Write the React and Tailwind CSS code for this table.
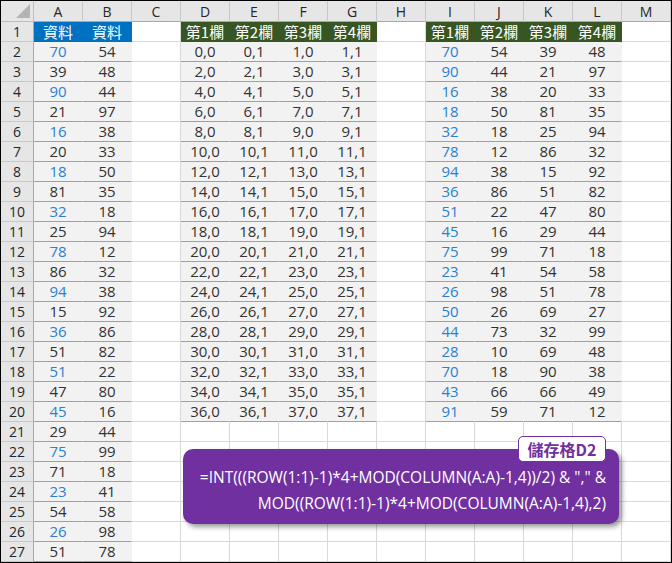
import React from "react";

const COLS = ["A", "B", "C", "D", "E", "F", "G", "H", "I", "J", "K", "L", "M"];

const AB = [
  [70, 54], [39, 48], [90, 44], [21, 97], [16, 38], [20, 33], [18, 50], [81, 35],
  [32, 18], [25, 94], [78, 12], [86, 32], [94, 38], [15, 92], [36, 86], [51, 82],
  [51, 22], [47, 80], [45, 16], [29, 44], [75, 99], [71, 18], [23, 41], [54, 58],
  [26, 98], [51, 78],
];

const IL = [
  [70, 54, 39, 48], [90, 44, 21, 97], [16, 38, 20, 33], [18, 50, 81, 35],
  [32, 18, 25, 94], [78, 12, 86, 32], [94, 38, 15, 92], [36, 86, 51, 82],
  [51, 22, 47, 80], [45, 16, 29, 44], [75, 99, 71, 18], [23, 41, 54, 58],
  [26, 98, 51, 78], [50, 26, 69, 27], [44, 73, 32, 99], [28, 10, 69, 48],
  [70, 18, 90, 38], [43, 66, 66, 49], [91, 59, 71, 12],
];

const HEAD4 = ["第1欄", "第2欄", "第3欄", "第4欄"];

// returns { text, kind } for a cell; kind decides fill/colour
function cellOf(c, r) {
  if (c <= 1) {
    if (r === 1) return { text: "資料", kind: "blue" };
    const v = AB[r - 2][c];
    const blue = c === 0 && r % 2 === 0;
    return { text: v, kind: blue ? "fillBlue" : "fill" };
  }
  if (c >= 3 && c <= 6 && r <= 20) {
    if (r === 1) return { text: HEAD4[c - 3], kind: "green" };
    const k = r - 2;
    const a = c <= 4 ? 2 * k : 2 * k + 1;
    const b = (c - 3) % 2;
    return { text: `${a},${b}`, kind: "fill" };
  }
  if (c >= 8 && c <= 11 && r <= 20) {
    if (r === 1) return { text: HEAD4[c - 8], kind: "green" };
    return { text: IL[r - 2][c - 8], kind: c === 8 ? "fillBlue" : "fill" };
  }
  return { text: "", kind: "empty" };
}

const KIND_CLASS = {
  blue: "bg-[#0070c0] border-[#0070c0] text-white text-[15px] font-['Noto_Sans_CJK_TC',sans-serif]",
  green: "bg-[#375623] border-[#375623] text-white text-[15px] font-['Noto_Sans_CJK_TC',sans-serif]",
  fill: "bg-[#f2f2f2] border-r-[#f2f2f2] border-b-[#a0a0a0] text-[#333333]",
  fillBlue: "bg-[#f2f2f2] border-r-[#f2f2f2] border-b-[#a0a0a0] text-[#2a7fd0]",
  empty: "bg-white border-[#d9d9d9]",
};

function Cell({ c, r }) {
  const { text, kind } = cellOf(c, r);
  return (
    <div
      className={`border-r border-b flex items-center justify-center leading-none ${KIND_CLASS[kind]}`}
    >
      {text}
    </div>
  );
}

export default function App() {
  const rows = Array.from({ length: 27 }, (_, i) => i + 1);
  return (
    <div className="relative w-[672px] h-[563px] overflow-hidden bg-white border border-black font-['Open_Sans',sans-serif] text-[15px]">
      <div className="grid grid-cols-[33px_repeat(13,49px)] grid-rows-[21px_repeat(27,20px)]">
        <div className="relative bg-[#e6e6e6] border-r border-b border-[#bdbdbd]">
          <div className="absolute right-[3px] bottom-[3px] w-0 h-0 border-l-[14px] border-l-transparent border-b-[14px] border-b-[#b4b4b4]" />
        </div>
        {COLS.map((c) => (
          <div
            key={c}
            className="bg-[#e6e6e6] border-r border-b border-r-[#c8c8c8] border-b-[#a8a8a8] flex items-center justify-center text-[14px] text-[#262626]"
          >
            {c}
          </div>
        ))}
        {rows.map((r) => (
          <React.Fragment key={r}>
            <div className="bg-[#e6e6e6] border-r border-b border-r-[#a8a8a8] border-b-[#c8c8c8] flex items-center justify-center text-[14px] text-[#262626]">
              {r}
            </div>
            {COLS.map((_, c) => (
              <Cell key={c} c={c} r={r} />
            ))}
          </React.Fragment>
        ))}
      </div>

      <div className="absolute left-[182px] top-[448px] w-[436px] h-[75px] rounded-[10px] bg-[#7030a0] shadow-[3px_3px_5px_rgba(0,0,0,0.4)] flex flex-col items-end justify-center pr-[13px] pt-[6px] text-white text-[15.5px] leading-[26px]">
        <div>=INT(((ROW(1:1)-1)*4+MOD(COLUMN(A:A)-1,4))/2) &amp; "," &amp;</div>
        <div>MOD((ROW(1:1)-1)*4+MOD(COLUMN(A:A)-1,4),2)</div>
      </div>
      <div className="absolute left-[517px] top-[435px] w-[88px] h-[26px] rounded-[5px] bg-white border border-[#7030a0] flex items-center justify-center text-[#7030a0] text-[16px] font-bold font-['Noto_Sans_CJK_TC',sans-serif]">
        儲存格D2
      </div>
    </div>
  );
}
